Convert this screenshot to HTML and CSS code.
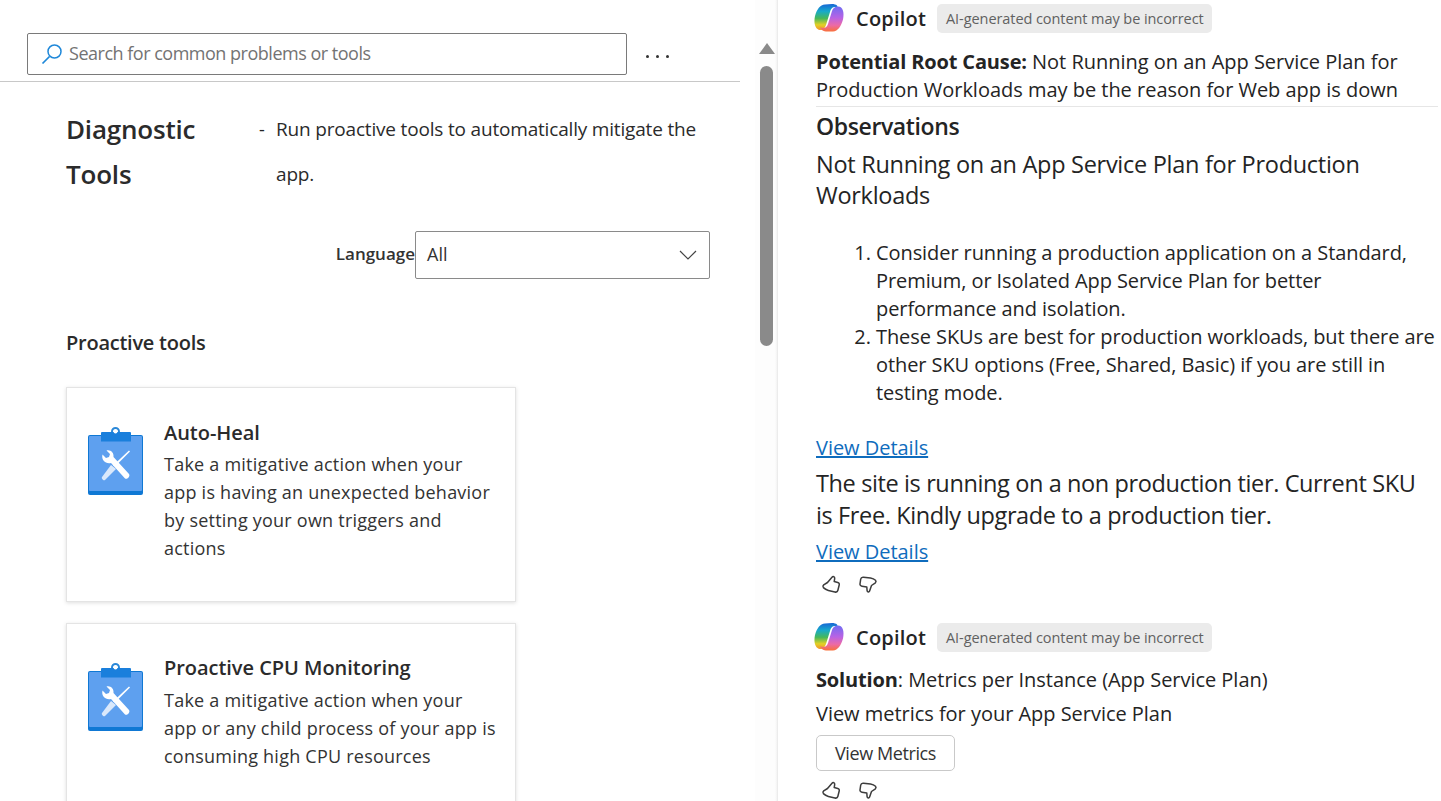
FILE: index.html
```html
<!DOCTYPE html>
<html lang="en">
<head>
<meta charset="utf-8">
<title>Diagnostic Tools</title>
<link rel="stylesheet" href="styles.css">
</head>
<body>
<svg class="defs" width="0" height="0" aria-hidden="true">
  <defs>
    <linearGradient id="cpL" x1="0" y1="0" x2="0" y2="1"><stop offset="0" stop-color="#1766d6"/><stop offset=".28" stop-color="#17aacb"/><stop offset=".55" stop-color="#46b85a"/><stop offset=".8" stop-color="#e3d125"/><stop offset="1" stop-color="#f2932a"/></linearGradient>
    <linearGradient id="cpR" x1="0" y1="0" x2="0" y2="1"><stop offset="0" stop-color="#6f6cf2"/><stop offset=".45" stop-color="#b863e4"/><stop offset=".75" stop-color="#ec6aa6"/><stop offset="1" stop-color="#f9703a"/></linearGradient>
    <symbol id="copilot" viewBox="0 0 31 28">
      <path fill="url(#cpL)" d="M11 .5C6 1 3 5 1 12c-1.500 7 0 13 5 14 3 0 5-2 6-5l4-13c1-4 3-5 5-5 2.500 0 3 1 4 3l-2-4.500C22 .5 20 0 18 0z"/>
      <path fill="url(#cpR)" d="M19 27.500c5-.5 8-5 10-12 1.500-7 0-13-5-13-3 0-5 1.500-6 4.500l-4 13c-1 3-3 4-5 4s-3-1-3.500-2l1.500 3c1 1.500 3 2.500 5 2.500z"/>
    </symbol>
    <symbol id="tool" viewBox="0 0 56 68">
      <rect x="0" y="8" width="55" height="60" rx="2" fill="#0f78d4"/>
      <rect x="1" y="9" width="53" height="55" rx="1" fill="#5ea0ef"/>
      <circle cx="27.500" cy="4.500" r="3.500" fill="none" stroke="#2b88d8" stroke-width="2"/>
      <path d="M14 5h28a1 1 0 0 1 1 1v8.500H13V6a1 1 0 0 1 1-1z" fill="#1a7fdc"/>
      <circle cx="27.500" cy="4.500" r="2" fill="#fff"/>
      <path d="M41 23.500 42 24.500 27 39.500l-2-1z" fill="#fff"/>
      <path d="M23 38l5 4-11 11c-1.500 1-4-1.500-3-3z" fill="#d9e8fb"/>
      <path d="M14.500 27.500 18 31l3-1 1-3-3.500-3.500c4-1 7.500 2 7 6.500L41 47c1.500 2-1.500 6-4 4.500L23 36c-5 1.500-10-3-8.500-8.500z" fill="#fff"/>
    </symbol>
    <symbol id="up" viewBox="0 0 20 20">
      <path fill="none" stroke="#3d3d3d" stroke-width="1.500" stroke-linejoin="round" stroke-linecap="round" d="M6.500 8.500 11 3.200c1-1.200 2.900-.5 2.700 1.100l-.5 3.300 3.600.9c1.200.3 1.700 1.300 1.400 2.500l-1.300 5.300c-.4 1.500-1.500 2.100-3 1.700l-6.500-1.600c-1.900-.5-3.700-1.500-5-2.800-.8-1-.6-1.800.3-2.700z"/>
    </symbol>
    <symbol id="down" viewBox="0 0 20 20">
      <path fill="none" stroke="#3d3d3d" stroke-width="1.500" stroke-linejoin="round" stroke-linecap="round" d="M13.500 11.500 11.600 17c-.5 1.400-2.400 1.100-2.500-.4L8.800 13 4 12.200C2.700 12 1.800 11 2 9.800l.7-4.600C3 3.700 4 3 5.500 3.200l7 .9c1.800.3 3.700 1 5 2.200.8.9.6 1.700-.1 2.500z"/>
    </symbol>
  </defs>
</svg>
<main class="page">
  <section class="left">
    <div class="left-scroll">
      <header class="toolbar">
        <div class="search">
          <svg class="search-icon" viewBox="0 0 22 22" width="22" height="22" aria-hidden="true"><circle cx="13.500" cy="8.500" r="6.500" fill="none" stroke="#1f88d9" stroke-width="1.500"/><path d="M8.500 13.500 1.500 20.500" stroke="#1f88d9" stroke-width="1.700" fill="none"/></svg>
          <span class="placeholder">Search for common problems or tools</span>
        </div>
        <div class="more"><i></i><i></i><i></i></div>
      </header>
      <div class="intro">
        <h1 class="title">Diagnostic Tools</h1>
        <span class="dash">-</span>
        <p class="desc">Run proactive tools to automatically mitigate the app.</p>
      </div>
      <div class="filter">
        <label class="filter-label">Language</label>
        <div class="select"><span>All</span>
          <svg viewBox="0 0 18 10" width="18" height="10" aria-hidden="true"><path d="M1 1l8 8 8-8" fill="none" stroke="#444" stroke-width="1.200"/></svg>
        </div>
      </div>
      <h2 class="section">Proactive tools</h2>
      <div class="cards">
        <article class="card card-a">
          <svg class="card-icon" aria-hidden="true"><use href="#tool"/></svg>
          <div class="card-body">
            <h3>Auto-Heal</h3>
            <p>Take a mitigative action when your app is having an unexpected behavior by setting your own triggers and actions</p>
          </div>
        </article>
        <article class="card card-b">
          <svg class="card-icon" aria-hidden="true"><use href="#tool"/></svg>
          <div class="card-body">
            <h3>Proactive CPU Monitoring</h3>
            <p>Take a mitigative action when your app or any child process of your app is consuming high CPU resources</p>
          </div>
        </article>
      </div>
    </div>
    <div class="scrollbar">
      <div class="arrow"></div>
      <div class="thumb"></div>
    </div>
  </section>
  <section class="right">
    <div class="msg-head">
      <svg class="logo" aria-hidden="true"><use href="#copilot"/></svg>
      <span class="name">Copilot</span>
      <span class="badge">AI-generated content may be incorrect</span>
    </div>
    <p class="cause"><b>Potential Root Cause:</b> Not Running on an App Service Plan for Production Workloads may be the reason for Web app is down</p>
    <hr class="rule">
    <h2 class="obs">Observations</h2>
    <p class="big">Not Running on an App Service Plan for Production Workloads</p>
    <ol class="steps">
      <li>Consider running a production application on a Standard, Premium, or Isolated App Service Plan for better performance and isolation.</li>
      <li>These SKUs are best for production workloads, but there are other SKU options (Free, Shared, Basic) if you are still in testing mode.</li>
    </ol>
    <a class="link link-a" href="#">View Details</a>
    <p class="big big-b">The site is running on a non production tier. Current SKU is Free. Kindly upgrade to a production tier.</p>
    <a class="link link-b" href="#">View Details</a>
    <div class="thumbs">
      <svg aria-hidden="true"><use href="#up"/></svg>
      <svg aria-hidden="true"><use href="#down"/></svg>
    </div>
    <div class="msg-head second">
      <svg class="logo" aria-hidden="true"><use href="#copilot"/></svg>
      <span class="name">Copilot</span>
      <span class="badge">AI-generated content may be incorrect</span>
    </div>
    <p class="sol"><b>Solution</b>: Metrics per Instance (App Service Plan)</p>
    <p class="sol sol-b">View metrics for your App Service Plan</p>
    <button class="btn" type="button">View Metrics</button>
    <div class="thumbs thumbs-b">
      <svg aria-hidden="true"><use href="#up"/></svg>
      <svg aria-hidden="true"><use href="#down"/></svg>
    </div>
  </section>
</main>
</body>
</html>
```
FILE: styles.css
```css
* { box-sizing: border-box; }
html, body { margin: 0; height: 801px; overflow: hidden; background: #fff; }
body { font-family: "Open Sans", "Noto Sans", "Liberation Sans", sans-serif; color: #242424; }
.defs { position: absolute; }
h1, h2, h3, p, ol { margin: 0; font-weight: 400; }

.page { display: flex; height: 801px; }

/* left pane */
.left { width: 778px; height: 801px; display: flex; border-right: 1px solid #ececec; }
.left-scroll { width: 740px; flex: none; }
.toolbar { height: 82px; padding: 33px 0 0 27px; display: flex; border-bottom: 1px solid #c8c8c8; }
.search { width: 600px; height: 42px; border: 1px solid #7a7a7a; border-radius: 2px; display: flex; align-items: center; padding: 0 0 2px 13px; gap: 6px; }
.search-icon { flex: none; margin-top: 2px; }
.placeholder { font-size: 18px; color: #737373; letter-spacing: -.49px; }
.more { display: flex; gap: 7px; margin: 22px 0 0 19px; height: 4px; }
.more i { width: 3px; height: 3px; border-radius: 50%; background: #333; }

.intro { display: flex; padding: 25px 0 0 66px; height: 149px; }
.title { width: 150px; font-size: 26px; line-height: 45px; font-weight: 600; color: #2b2b2b; letter-spacing: -.2px; }
.dash { width: 17px; margin-left: 43px; font-size: 18px; line-height: 45px; }
.desc { width: 440px; font-size: 19px; line-height: 45px; color: #2b2b2b; letter-spacing: -.18px; }

.filter { display: flex; align-items: center; justify-content: flex-end; padding-right: 30px; height: 48px; }
.filter-label { font-size: 17px; font-weight: 600; color: #333; margin-bottom: 3px; }
.select { width: 295px; height: 48px; border: 1px solid #8a8a8a; border-radius: 2px; display: flex; align-items: center; justify-content: space-between; padding: 0 12px 0 11px; font-size: 18px; color: #333; }
.select span { margin-bottom: 2px; }

.section { margin: 49px 0 0 66px; font-size: 20px; line-height: 30px; font-weight: 600; color: #2b2b2b; letter-spacing: -.25px; }

.cards { margin: 29px 0 0 66px; display: flex; flex-direction: column; gap: 21px; }
.card { width: 450px; border: 1px solid #e4e4e4; box-shadow: 0 1px 4px rgba(0, 0, 0, .13); display: flex; padding: 30px 17px 0 21px; gap: 20px; background: #fff; }
.card-a { height: 215px; }
.card-b { height: 215px; }
.card-icon { width: 56px; height: 68px; flex: none; margin-top: 9px; }
.card-body { width: 334.500px; flex: none; }
.card-body h3 { font-size: 20px; line-height: 29px; font-weight: 600; color: #2b2b2b; letter-spacing: -.04px; }
.card-body p { font-size: 18px; line-height: 28px; margin-top: 3px; color: #333; letter-spacing: .23px; }
.card-b h3 { line-height: 28px; }
.card-b .card-body p { margin-top: 4px; }

.scrollbar { width: 37px; padding: 43px 0 0 19px; background: linear-gradient(to right, #fff 15px, #fdfdfd 15px, #fdfdfd 35px, #f3f3f3 37px); }
.arrow { width: 0; height: 0; border-left: 8px solid transparent; border-right: 8px solid transparent; border-bottom: 11px solid #8a8a8a; }
.thumb { width: 13px; height: 280px; margin: 12px 0 0 1px; border-radius: 7px; background: #8a8a8a; }

/* right pane */
.right { flex: 1; padding: 0 0 0 38px; min-width: 0; }
.msg-head { display: flex; align-items: center; height: 36px; }
.logo { width: 31px; height: 28px; flex: none; margin-left: -2px; }
.name { font-size: 20px; font-weight: 600; margin-left: 11px; letter-spacing: .2px; }
.badge { margin-left: 11px; height: 29px; line-height: 29px; padding: 0 8px 0 9px; border-radius: 5px; background: #ebebeb; font-size: 14.500px; color: #616161; letter-spacing: -.07px; white-space: nowrap; }
.cause { margin-top: 12px; font-size: 20px; line-height: 28px; letter-spacing: -.02px; width: 620px; }
.cause b, .sol b { font-weight: 700; letter-spacing: -.15px; }
.rule { margin: 2px 0 0 0; border: 0; border-top: 1px solid #e6e6e6; width: 622px; }
.obs { margin-top: 2px; font-size: 23px; line-height: 34px; font-weight: 600; letter-spacing: -.37px; }
.big { margin-top: 6px; font-size: 23.500px; line-height: 31px; letter-spacing: -.28px; width: 610px; }
.steps { margin-top: 28px; padding-left: 60px; font-size: 20px; line-height: 28px; letter-spacing: -.08px; }
.link { display: block; width: max-content; font-size: 20px; line-height: 28px; color: #0f6cbd; letter-spacing: -.03px; }
.link-a { margin-top: 27px; }
.big-b { margin-top: 5px; line-height: 32px; letter-spacing: -.38px; }
.link-b { margin-top: 7px; }
.thumbs { display: flex; gap: 17px; margin: 8px 0 0 5px; height: 24px; }
.thumbs svg { width: 20px; height: 20px; }
.second { margin-top: 21px; }
.sol { font-size: 20px; line-height: 28px; letter-spacing: -.03px; }
.second + .sol { margin-top: 11px; }
.sol-b { margin-top: 6px; }
.btn { display: block; margin-top: 7px; width: 139px; height: 36px; border: 1px solid #c9c9c9; border-radius: 5px; background: #fff; font: inherit; font-size: 18px; letter-spacing: -.4px; color: #333; padding: 0; }
.thumbs-b { margin-top: 9px; }
```
